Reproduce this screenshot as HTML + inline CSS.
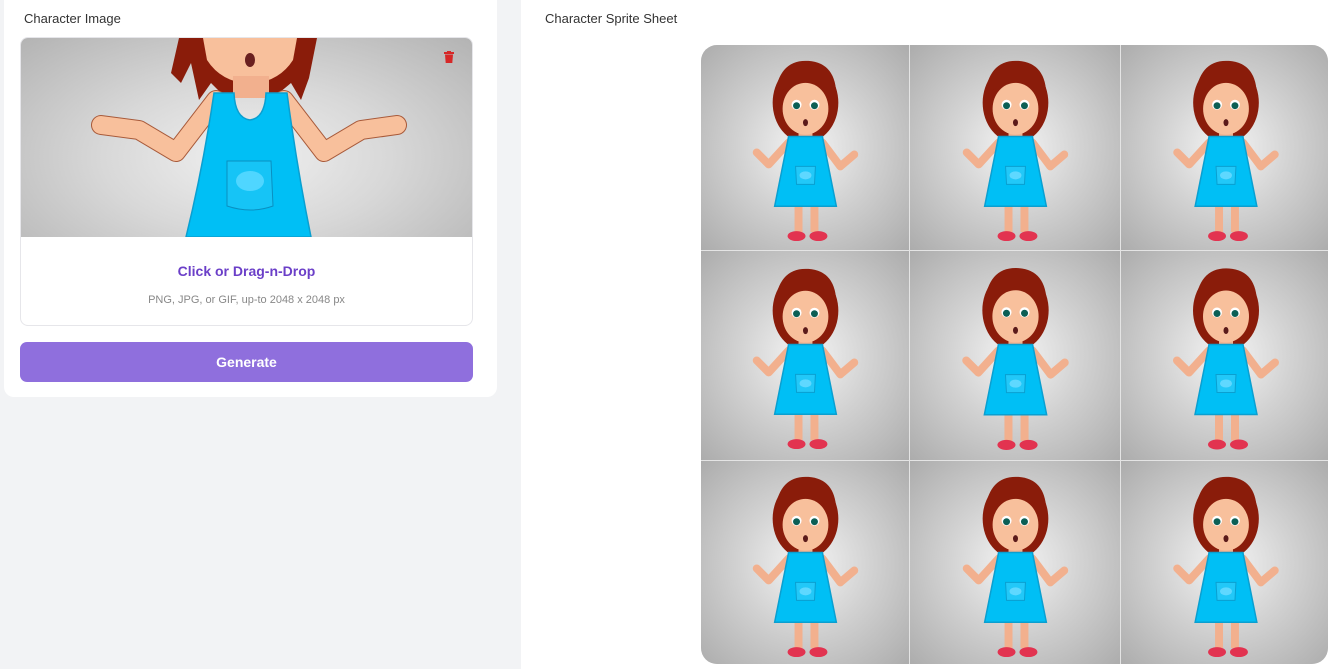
<!DOCTYPE html>
<html><head><meta charset="utf-8"><style>
*{margin:0;padding:0;box-sizing:border-box}
body{width:1333px;height:669px;overflow:hidden;background:#fff;font-family:"Liberation Sans",sans-serif;position:relative}
.left{position:absolute;left:0;top:0;width:521px;height:669px;background:#f2f3f5}
.card{position:absolute;left:4px;top:-10px;width:493px;height:407px;background:#fff;border-radius:10px}
.t1{position:absolute;left:24px;top:11px;font-size:13px;color:#333}
.drop{position:absolute;left:20px;top:37px;width:453px;height:289px;border:1px solid #e6e6ea;border-radius:8px;overflow:hidden;background:#fff}
.img{position:absolute;left:0;top:0;width:451px;height:199px;background:radial-gradient(ellipse at 50% 60%,#f0f0f0 0%,#d8d8d8 45%,#b3b3b3 100%)}
.cd{position:absolute;left:0;width:451px;text-align:center;top:225px;font-size:14px;font-weight:bold;color:#6b3fc8}
.sub{position:absolute;left:0;width:451px;text-align:center;top:256px;font-size:11px;color:#888}
.btn{position:absolute;left:20px;top:342px;width:453px;height:40px;border-radius:7px;background:#8f6fdd;color:#fff;font-weight:bold;font-size:14px;text-align:center;line-height:40px}
.t2{position:absolute;left:545px;top:11px;font-size:13px;color:#333}
.sheet{position:absolute;left:701px;top:45px;width:627px;height:619px;border-radius:16px;overflow:hidden;display:grid;grid-template-columns:208px 210px 209px;grid-template-rows:205px 209px 205px;gap:1px;background:#e4e4e4}
.cell{background:radial-gradient(ellipse at 50% 50%,#f4f4f4 0%,#d2d2d2 45%,#acacac 100%)}
.cell svg{width:100%;height:100%;display:block}
</style></head><body>
<svg width="0" height="0" style="position:absolute">
<defs>
<g id="g">
<ellipse cx="105" cy="58" rx="33" ry="40" fill="#8a1c0a"/>
<rect x="98" y="80" width="14" height="14" fill="#f2b08e"/>
<ellipse cx="105" cy="64" rx="23" ry="26" fill="#f8c09c"/>
<path d="M74 52 Q78 14 108 16 Q136 18 136 52 Q122 34 98 38 Q84 42 74 52Z" fill="#8a1c0a"/>
<circle cx="96" cy="60" r="5" fill="#fff"/><circle cx="114" cy="60" r="5" fill="#fff"/>
<circle cx="96" cy="61" r="3.5" fill="#0c5f55"/><circle cx="114" cy="61" r="3.5" fill="#0c5f55"/>
<ellipse cx="105" cy="78" rx="2.5" ry="3.5" fill="#5a1a1a"/>
<path d="M88 98 L68 120 L56 108" stroke="#f2b08e" stroke-width="8" fill="none" stroke-linecap="round" stroke-linejoin="round"/>
<path d="M122 98 L140 122 L154 110" stroke="#f2b08e" stroke-width="8" fill="none" stroke-linecap="round" stroke-linejoin="round"/>
<rect x="94" y="150" width="8" height="38" fill="#f2b08e"/><rect x="110" y="150" width="8" height="38" fill="#f2b08e"/>
<path d="M88 92 L122 92 L136 162 L74 162 Z" fill="#00bff5" stroke="#0a9fd0" stroke-width="1.5"/>
<path d="M95 122 L115 122 L114 140 L96 140Z" fill="#22c8f8" stroke="#0a9fd0"/>
<ellipse cx="105" cy="131" rx="6" ry="4" fill="#5fd8ff"/>
<ellipse cx="96" cy="192" rx="9" ry="5" fill="#e23350"/><ellipse cx="118" cy="192" rx="9" ry="5" fill="#e23350"/>
</g>
</defs></svg>
<div class="left">
<div class="card"></div>
<div class="t1">Character Image</div>
<div class="drop">
<div class="img">
<svg width="451" height="199" viewBox="0 0 451 199">
<path d="M158 0 L150 35 L160 45 L170 25 L178 62 L190 45 L200 55 L258 55 L270 45 L280 62 L288 40 L296 0Z" fill="#8a1c0a"/>
<path d="M182 0 L186 22 Q200 44 229 46 Q258 44 272 22 L276 0Z" fill="#f8c09c"/>
<rect x="212" y="38" width="36" height="22" fill="#f2b08e"/>
<ellipse cx="229" cy="22" rx="5" ry="7" fill="#6a2020"/>
<path d="M195 62 L155 114 L118 92 L80 87 M263 62 L303 114 L340 92 L376 87" stroke="#a85a3a" stroke-width="20" fill="none" stroke-linecap="round" stroke-linejoin="round"/>
<path d="M195 62 L155 114 L118 92 L80 87 M263 62 L303 114 L340 92 L376 87" stroke="#f8c09c" stroke-width="18" fill="none" stroke-linecap="round" stroke-linejoin="round"/>
<path d="M193 55 L213 55 Q214 80 229 82 Q244 80 245 55 L266 55 Q276 130 290 199 L165 199 Q182 130 193 55Z" fill="#00bff5" stroke="#0a9fd0" stroke-width="1.5"/>
<path d="M206 123 L250 123 L252 168 Q230 176 206 168Z" fill="#16c4f6" stroke="#0a8fc0"/>
<ellipse cx="229" cy="143" rx="14" ry="10" fill="#4fd6ff"/>
</svg>
<svg style="position:absolute;left:423px;top:13px" width="10" height="12" viewBox="0 0 10 12"><rect x="0" y="1" width="10" height="2" fill="#d62828"/><rect x="3" y="0" width="4" height="2" fill="#d62828"/><path d="M1 3.5 H9 L8.3 12 H1.7Z" fill="#d62828"/></svg>
</div>
<div class="cd">Click or Drag-n-Drop</div>
<div class="sub">PNG, JPG, or GIF, up-to 2048 x 2048 px</div>
</div>
<div class="btn">Generate</div>
</div>
<div class="t2">Character Sprite Sheet</div>
<div class="sheet">
<div class="cell"><svg viewBox="0 0 209 206"><use href="#g"/></svg></div>
<div class="cell"><svg viewBox="0 0 209 206"><use href="#g"/></svg></div>
<div class="cell"><svg viewBox="0 0 209 206"><use href="#g"/></svg></div>
<div class="cell"><svg viewBox="0 0 209 206"><use href="#g"/></svg></div>
<div class="cell"><svg viewBox="0 0 209 206"><use href="#g"/></svg></div>
<div class="cell"><svg viewBox="0 0 209 206"><use href="#g"/></svg></div>
<div class="cell"><svg viewBox="0 0 209 206"><use href="#g"/></svg></div>
<div class="cell"><svg viewBox="0 0 209 206"><use href="#g"/></svg></div>
<div class="cell"><svg viewBox="0 0 209 206"><use href="#g"/></svg></div>
</div>
</body></html>
